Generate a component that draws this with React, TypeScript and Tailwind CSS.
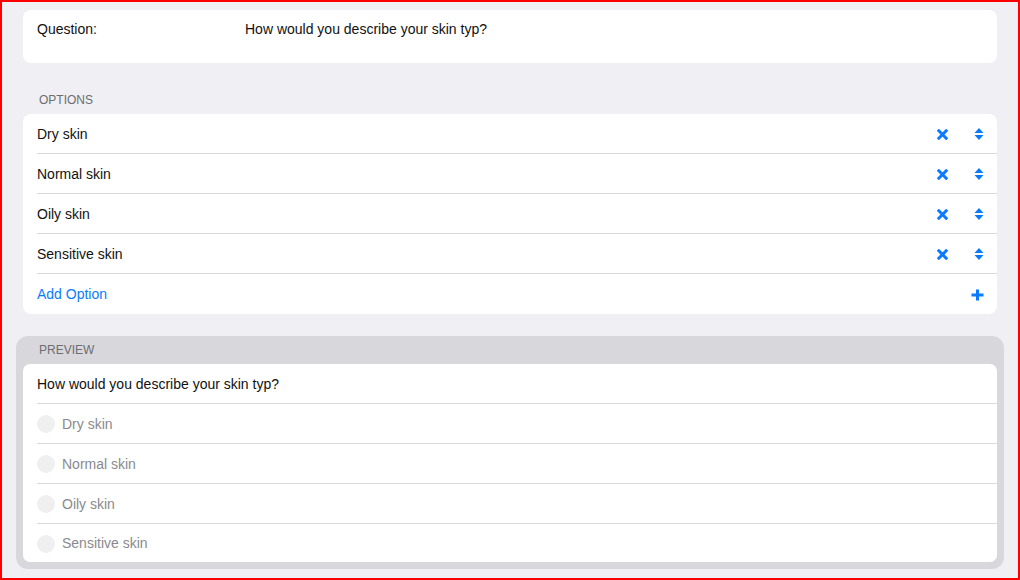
import React from "react";

const XIcon = () => (
  <svg width="11" height="11" viewBox="0 0 11 11" className="block">
    <path d="M1.8 1.8 L9.2 9.2 M9.2 1.8 L1.8 9.2" stroke="#0a7bff" strokeWidth="3" strokeLinecap="square" />
  </svg>
);

const SortIcon = () => (
  <svg width="10" height="14" viewBox="0 0 10 14" className="block">
    <path d="M0.5 6 L5 1 L9.5 6 Z" fill="#0a7bff" />
    <path d="M0.5 8 L5 13 L9.5 8 Z" fill="#0a7bff" />
  </svg>
);

const PlusIcon = () => (
  <svg width="13" height="12" viewBox="0 0 13 12" className="block">
    <path d="M6.5 0.5 V11.5 M0.5 6 H12.5" stroke="#0a7bff" strokeWidth="3" />
  </svg>
);

const options = ["Dry skin", "Normal skin", "Oily skin", "Sensitive skin"];

export default function App() {
  return (
    <div
      className="w-[1020px] h-[580px] border-2 border-[#ff0000] bg-[#efeff4] px-[21px] pt-[8px] overflow-hidden text-[14px] text-[#111]"
      style={{ fontFamily: '"Liberation Sans", Arial, sans-serif' }}
    >
      {/* Question card */}
      <div className="bg-white rounded-[8px] h-[53px] pl-[14px] pt-[9px] flex">
        <div className="w-[208px] leading-[20px]">Question:</div>
        <div className="leading-[20px]">How would you describe your skin typ?</div>
      </div>

      {/* Options */}
      <div className="mt-[29px] pl-[16px] text-[12px] leading-[16px] text-[#6d6d72] uppercase">Options</div>
      <div className="mt-[6px] bg-white rounded-[8px] flex flex-col">
        {options.map((o) => (
          <div key={o} className="h-[40px] pl-[14px] flex">
            <div className="flex-1 flex items-center border-b border-[#d9d9dc] pr-[13px] pt-[1px]">
              <span className="flex-1">{o}</span>
              <span className="mr-[26px]"><XIcon /></span>
              <SortIcon />
            </div>
          </div>
        ))}
        <div className="h-[40px] pl-[14px] pr-[13px] pt-[1px] flex items-center">
          <span className="flex-1 text-[#0a7bff]">Add Option</span>
          <PlusIcon />
        </div>
      </div>

      {/* Preview */}
      <div className="mt-[22px] -mx-[7px] bg-[#d8d8dc] rounded-[12px] px-[7px] pb-[7px]">
        <div className="pt-[6px] pb-[6px] pl-[16px] text-[12px] leading-[16px] text-[#6d6d72] uppercase">Preview</div>
        <div className="bg-white rounded-[7px] flex flex-col pl-[14px]">
          <div className="h-[40px] pt-[1px] flex items-center border-b border-[#d9d9dc]">
            How would you describe your skin typ?
          </div>
          {options.map((o, i) => (
            <div
              key={o}
              className={
                i < options.length - 1
                  ? "h-[40px] pt-[1px] flex items-center border-b border-[#d9d9dc]"
                  : "h-[38px] pt-[1px] flex items-center"
              }
            >
              <span className="w-[18px] h-[18px] rounded-full bg-[#efeff0] mr-[7px]" />
              <span className="text-[#8a8a8e]">{o}</span>
            </div>
          ))}
        </div>
      </div>
    </div>
  );
}
